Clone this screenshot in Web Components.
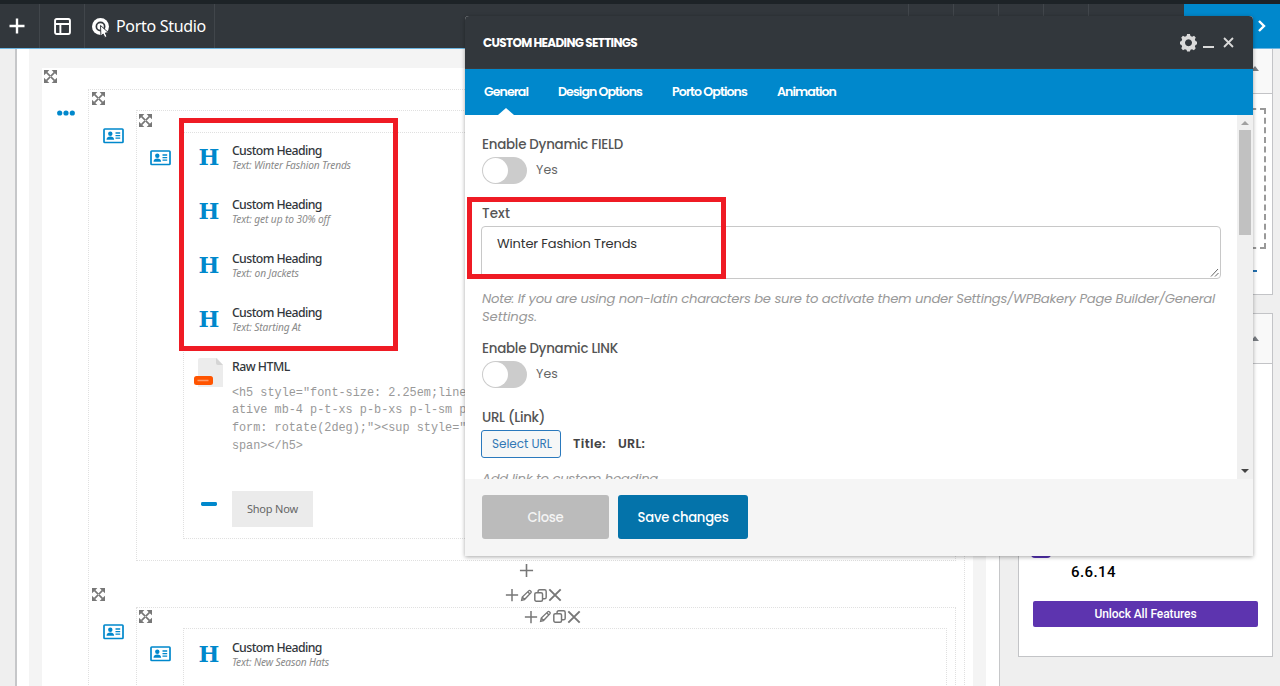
<!DOCTYPE html>
<html lang="en">
<head>
<meta charset="utf-8">
<title>Porto Studio</title>
<style>
  body {
    margin: 0;
    width: 1280px;
    height: 686px;
    overflow: hidden;
    position: relative;
    background: #efefef;
    font-family: "Noto Sans", "Open Sans", sans-serif;
    color: #32373c;
  }
  .workspace {
    display: flex;
    height: 637px;
  }
</style>
</head>
<body>
  <builder-navbar></builder-navbar>
  <div class="workspace">
    <builder-canvas></builder-canvas>
    <builder-sidebar></builder-sidebar>
  </div>
  <settings-modal></settings-modal>
  <mark-frame style="left:179px;top:118px;width:219px;height:233px"></mark-frame>
  <mark-frame style="left:467px;top:197px;width:259px;height:82px"></mark-frame>

<script>
// Tracks its text so that the line is exactly `w` pixels wide
customElements.define(
  'fit-text',
  class extends HTMLElement {
    constructor() {
      super();
      this.attachShadow({ mode: 'open' }).innerHTML = `
        <style>
          :host { display: block; white-space: nowrap; }
          span { letter-spacing: 0; }
        </style>
        <span><slot></slot></span>
      `;
    }

    connectedCallback() {
      const span = this.shadowRoot.querySelector('span');
      const nodes = this.shadowRoot.querySelector('slot').assignedNodes({ flatten: true });
      const count = nodes.reduce((sum, node) => sum + node.textContent.length, 0);
      const gap = Number(this.getAttribute('w')) - span.getBoundingClientRect().width;
      if (count) span.style.letterSpacing = `${gap / count}px`;
    }
  }
);

const icons = {
  plus: '<path d="M8 1v14M1 8h14" stroke="currentColor" stroke-width="1.7"/>',
  plusBold: '<path d="M8 .5v15M.5 8h15" stroke="currentColor" stroke-width="2.4"/>',
  layout: '<rect x="1" y="1" width="14" height="14" rx="1.5" fill="none" stroke="currentColor" stroke-width="1.8"/><path d="M1 5.6h14M6 5.6V15" stroke="currentColor" stroke-width="1.8"/>',
  studio: '<circle cx="8" cy="8" r="8" fill="currentColor"/><circle cx="8" cy="8" r="3.9" fill="none" stroke="#32373c" stroke-width="1.6"/><path d="M8 7l7.5 6.8-3 .3 1.6 3.3-2 1-1.6-3.4L8.4 17z" fill="currentColor" stroke="#32373c" stroke-width=".9"/>',
  expand: '<path d="M3 3l10 10M13 3L3 13" stroke="currentColor" stroke-width="2"/><path d="M0 0h6.6L4.600 2 2 4.600 0 6.600zM16 0v6.600L11.400 2 9.400 0zM0 16V9.400L4.600 14l2 2zM16 16H9.400l4.600-4.600 2-2z" fill="currentColor"/><path d="M7 8h2M8 7v2" stroke="#fff" stroke-width=".5"/>',
  card: '<rect x="1" y="1" width="19" height="13.5" rx=".8" fill="#fff" stroke="currentColor" stroke-width="1.7"/><circle cx="7.3" cy="5.7" r="2.2" fill="currentColor"/><path d="M3.500 11.800c0-2.400 1.700-3.200 3.800-3.200s3.800.8 3.800 3.200z" fill="currentColor"/><path d="M12.500 5h4.700M12.500 7.600h4.700M12.500 10.200h4.700" stroke="currentColor" stroke-width="1.3"/>',
  dots: '<circle cx="2.7" cy="3" r="2.6" fill="currentColor"/><circle cx="9" cy="3" r="2.6" fill="currentColor"/><circle cx="15.3" cy="3" r="2.6" fill="currentColor"/>',
  pencil: '<path d="M2 14l.8-4L11 2c1-1 3.600 1.200 2.600 2.500L5.500 13zM9.500 3.500l3 3M3 10l2.600 2.700" fill="none" stroke="currentColor" stroke-width="1.7"/>',
  copy: '<rect x="1" y="4.5" width="9.5" height="10.5" rx="1.8" fill="none" stroke="currentColor" stroke-width="1.8"/><path d="M5 4.500V3q0-2 2-2h6q2 0 2 2v7q0 2-2 2h-2.500" fill="none" stroke="currentColor" stroke-width="1.8"/>',
  cross: '<path d="M1.500 1.500l13 13M14.500 1.500l-13 13" stroke="currentColor" stroke-width="2.2"/>',
  close: '<path d="M1.500 1.500l13 13M14.500 1.500l-13 13" stroke="currentColor" stroke-width="2.7"/>',
  file: '<path d="M6 0h17l6 7v22H4V2q0-2 2-2z" fill="#ececec"/><path d="M22 0l7 7h-5q-2 0-2-2z" fill="#d5d5d5"/><rect x="0" y="18" width="19" height="9" rx="2.5" fill="#ff5400"/><path d="M3.500 22.500h11" stroke="#ff9c6b" stroke-width="1.5"/>',
  bar: '<rect width="17" height="4" rx="1.5" fill="currentColor"/>',
  gear: '<path fill-rule="evenodd" fill="currentColor" d="M6.700 0h2.600l.6 1.900 1.500.6 1.800-.9 1.600 1.700-.8 1.900.6 1.400 1.400.6v2.400l-1.400.7-.6 1.400.8 1.800-1.700 1.700-1.800-.9-1.400.6-.6 1.600H6.700l-.6-1.600-1.500-.6-1.800.9-1.600-1.700.8-1.800-.6-1.400L0 9.600V7.200l1.400-.6L2 5.200l-.8-1.900 1.600-1.700 1.800.9L6.100 1.900zM8 4.900a3.300 3.300 0 1 0 .01 0z"/>',
  chevron: '<path d="M2 1l5 5-5 5" fill="none" stroke="currentColor" stroke-width="2.4"/>',
};

customElements.define(
  'ui-icon',
  class extends HTMLElement {
    connectedCallback() {
      const [w, h] = this.getAttribute('size').split(' ');
      const box = this.getAttribute('box') || '0 0 16 16';
      if (!this.shadowRoot) this.attachShadow({ mode: 'open' });
      this.shadowRoot.innerHTML = `
        <style>
          :host { display: block; flex: none; width: ${w}px; height: ${h}px; }
          svg { display: block; overflow: visible; }
        </style>
        <svg width="${w}" height="${h}" viewBox="${box}">${icons[this.getAttribute('name')]}</svg>
      `;
    }
  }
);

customElements.define(
  'mark-frame',
  class extends HTMLElement {
    constructor() {
      super();
      this.attachShadow({ mode: 'open' }).innerHTML = `
        <style>
          :host {
            display: block;
            position: absolute;
            box-sizing: border-box;
            border: 5px solid #ef1b24;
            z-index: 3;
          }
        </style>
      `;
    }
  }
);

customElements.define(
  'builder-navbar',
  class extends HTMLElement {
    constructor() {
      super();
      this.attachShadow({ mode: 'open' }).innerHTML = `
        <style>
          :host {
            display: flex;
            box-sizing: border-box;
            height: 49px;
            border-top: 4px solid #1d2327;
            border-bottom: 1px solid #6db6e2;
            background: #32373c;
            color: #fff;
          }
          .cell {
            box-sizing: border-box;
            display: flex;
            align-items: center;
            justify-content: center;
            border-right: 1px solid #41464b;
          }
          .add { width: 40px; padding-right: 5px; }
          .layout { width: 45px; }
          .studio { width: 130px; justify-content: flex-start; padding-left: 7px; gap: 7px; font-size: 16px; }
          .space { width: 694px; }
          .tool { width: 45px; }
          .rest { flex: 1; }
          .update { display: flex; align-items: center; justify-content: flex-end; box-sizing: border-box; width: 96px; padding-right: 15px; background: #0088cc; }
        </style>
        <div class="cell add"><ui-icon name="plusBold" size="16 16"></ui-icon></div>
        <div class="cell layout"><ui-icon name="layout" size="17 17"></ui-icon></div>
        <div class="cell studio">
          <ui-icon name="studio" size="17 17"></ui-icon>
          <fit-text w="90">Porto Studio</fit-text>
        </div>
        <div class="cell space"></div>
        <div class="cell tool"></div>
        <div class="cell tool"></div>
        <div class="cell tool"></div>
        <div class="cell tool"></div>
        <div class="rest"></div>
        <div class="update"><ui-icon name="chevron" size="8 12" box="0 0 8 12"></ui-icon></div>
      `;
    }
  }
);

customElements.define(
  'row-controls',
  class extends HTMLElement {
    constructor() {
      super();
      this.attachShadow({ mode: 'open' }).innerHTML = `
        <style>
          :host { display: flex; align-items: center; gap: 1px; color: #777; }
        </style>
        <ui-icon name="plus" size="14 14"></ui-icon>
        <ui-icon name="pencil" size="13 13"></ui-icon>
        <ui-icon name="copy" size="13 13"></ui-icon>
        <ui-icon name="cross" size="14 14"></ui-icon>
      `;
    }
  }
);

// One level of the layout tree: a handle on top, a type icon on the left, content in the slot
customElements.define(
  'builder-section',
  class extends HTMLElement {
    constructor() {
      super();
      const type = this.getAttribute('type') || 'card';
      const typeIcon = type === 'dots'
        ? '<ui-icon name="dots" size="18 6" box="0 0 18 6"></ui-icon>'
        : '<ui-icon name="card" size="21 15.5" box="0 0 21 15.5"></ui-icon>';
      this.attachShadow({ mode: 'open' }).innerHTML = `
        <style>
          :host {
            display: grid;
            box-sizing: border-box;
            grid-template: 20.7px auto / 46.3px 1fr;
          }
          .handle {
            grid-column: 1 / -1;
            display: flex;
            align-items: flex-start;
            padding: 2.3px 0 0 2.4px;
            color: #777;
          }
          .type { padding: ${type === 'dots' ? '21.3px 0 0 14.5px' : '17.6px 0 0 13.4px'}; color: #0088cc; }
          ::slotted(row-controls) { margin-left: var(--controls, 400px); }
        </style>
        <div class="handle">
          <ui-icon name="expand" size="13 13"></ui-icon>
          <slot name="controls"></slot>
        </div>
        <div class="type">${typeIcon}</div>
        <div class="content"><slot></slot></div>
      `;
    }
  }
);

customElements.define(
  'heading-item',
  class extends HTMLElement {
    constructor() {
      super();
      this.attachShadow({ mode: 'open' }).innerHTML = `
        <style>
          :host { display: flex; height: 53.8px; }
          .glyph {
            width: 48px;
            box-sizing: border-box;
            padding-left: 14.5px;
            font: bold 22px/31px "DejaVu Serif", serif;
            color: #0088cc;
          }
          .title { font-size: 12.3px; font-weight: 500; line-height: 18px; color: #32373c; }
          .text { font-size: 10.2px; font-style: italic; line-height: 11px; color: #8a8a8a; }
        </style>
        <div class="glyph"><fit-text w="18.5">H</fit-text></div>
        <div>
          <div class="title"><fit-text w="90">Custom Heading</fit-text></div>
          <div class="text"><fit-text w="${this.getAttribute('w')}"><slot></slot></fit-text></div>
        </div>
      `;
    }
  }
);

customElements.define(
  'builder-canvas',
  class extends HTMLElement {
    constructor() {
      super();
      this.attachShadow({ mode: 'open' }).innerHTML = `
        <style>
          :host {
            box-sizing: border-box;
            flex: none;
            width: 985px;
            margin-left: 15px;
            padding: 0 13px 0 12px;
            border: solid #c6c7c9;
            border-width: 0 1px 0 2px;
            background: #fff;
          }
          .frame { box-sizing: border-box; border: solid #f4f4f4; border-width: 19px 13px 0; height: 637px; overflow: hidden; }
          .frame > builder-section { padding-right: 8px; }
          .box { border: 1px dotted #e0e0e0; box-sizing: border-box; }
          .outer { height: 620px; }
          .outer > builder-section { padding-right: 8px; }
          .row { height: 450.6px; }
          .row > builder-section, .next > builder-section { padding-right: 7.7px; }
          .items { height: 407px; padding-top: 9.3px; }
          .add { display: flex; height: 25px; padding: 2px 0 0 430px; box-sizing: border-box; color: #777; }
          .next { height: 120px; }
          .html { display: flex; height: 133px; }
          .html .icon { width: 48px; padding-left: 10px; box-sizing: border-box; }
          .title { font-size: 12.3px; font-weight: 500; line-height: 18px; }
          pre {
            margin: 9px 0 0;
            width: 520px;
            overflow: hidden;
            font: 11.85px/17.9px "Liberation Mono", monospace;
            color: #999;
          }
          .shop { display: flex; align-items: center; }
          .shop ui-icon { margin: -9px 15px 0 17px; color: #0088cc; }
          .btn { padding: 0 15px; background: #ebebeb; font-size: 11px; line-height: 36px; color: #666; }
        </style>
        <div class="frame">
          <builder-section type="dots">
            <div class="box outer">
              <builder-section>
                <div class="box row">
                  <builder-section>
                    <div class="box items">
                      <heading-item w="119">Text: Winter Fashion Trends</heading-item>
                      <heading-item w="98">Text: get up to 30% off</heading-item>
                      <heading-item w="67">Text: on Jackets</heading-item>
                      <heading-item w="69">Text: Starting At</heading-item>
                      <div class="html">
                        <div class="icon"><ui-icon name="file" size="29 29" box="0 0 29 29"></ui-icon></div>
                        <div>
                          <div class="title"><fit-text w="58">Raw HTML</fit-text></div>
                          <pre id="code"></pre>
                        </div>
                      </div>
                      <div class="shop">
                        <ui-icon name="bar" size="16 4" box="0 0 17 4"></ui-icon>
                        <div class="btn"><fit-text w="51">Shop Now</fit-text></div>
                      </div>
                    </div>
                  </builder-section>
                </div>
              </builder-section>
              <div class="add"><ui-icon name="plus" size="15 15"></ui-icon></div>
              <builder-section>
                <row-controls slot="controls"></row-controls>
                <div class="box next">
                  <builder-section style="--controls: 372px">
                    <row-controls slot="controls"></row-controls>
                    <div class="box items">
                      <heading-item w="97">Text: New Season Hats</heading-item>
                    </div>
                  </builder-section>
                </div>
              </builder-section>
            </div>
          </builder-section>
        </div>
      `;
      this.shadowRoot.querySelector('#code').textContent = [
        '<h5 style="font-size: 2.25em;line',
        'ative mb-4 p-t-xs p-b-xs p-l-sm p',
        'form: rotate(2deg);"><sup style="',
        'span></h5>',
      ].join('\n');
    }
  }
);

customElements.define(
  'builder-sidebar',
  class extends HTMLElement {
    constructor() {
      super();
      this.attachShadow({ mode: 'open' }).innerHTML = `
        <style>
          :host { display: block; flex: 1; padding: 0 7px 0 18px; }
          .panel { box-sizing: border-box; border: 1px solid #c3c4c7; background: #fff; }
          .first { height: 246px; border-top: 0; }
          .second { height: 344px; margin-top: 18px; }
          .head {
            display: flex;
            justify-content: flex-end;
            align-items: center;
            box-sizing: border-box;
            height: 45px;
            padding: 0 13px 6px;
            border-bottom: 1px solid #c3c4c7;
            background: #f9f9f9;
          }
          .second .head { height: 50px; padding-bottom: 0; }
          .head i { border: solid transparent; border-width: 0 4px 5px; border-bottom-color: #787c82; }
          .drop { box-sizing: border-box; height: 141px; margin: 14px 6px 0 15px; border: 2px dashed #999; }
          .link { height: 2px; width: 224px; margin: 21px 0 0 14px; background: #2271b1; }
          .logo { width: 20px; height: 20px; margin: 174px 0 0 12px; border-radius: 4px; background: #5532b4; }
          .version { margin: 4px 0 0 52px; font: 500 15px/20px Roboto, sans-serif; color: #000; }
          .unlock {
            margin: 19px 14px 0;
            border-radius: 2px;
            background: #5d34af;
            color: #fff;
            font: 500 12px/26px Roboto, sans-serif;
            display: flex;
            justify-content: center;
          }
        </style>
        <div class="panel first">
          <div class="head"><i></i></div>
          <div class="drop"></div>
          <div class="link"></div>
        </div>
        <div class="panel second">
          <div class="head"><i></i></div>
          <div class="logo"></div>
          <div class="version"><fit-text w="45">6.6.14</fit-text></div>
          <div class="unlock"><fit-text w="102">Unlock All Features</fit-text></div>
        </div>
      `;
    }
  }
);

customElements.define(
  'toggle-field',
  class extends HTMLElement {
    constructor() {
      super();
      this.attachShadow({ mode: 'open' }).innerHTML = `
        <style>
          :host { display: block; height: 46px; }
          .label { font-size: 13.4px; font-weight: 500; line-height: 20px; color: #555; }
          .line { display: flex; align-items: center; gap: 9px; margin-top: 2px; }
          .switch { box-sizing: border-box; width: 45px; height: 27px; padding: 1px; border-radius: 14px; background: #ccc; }
          .knob { width: 25px; height: 25px; border-radius: 50%; background: #fff; }
          .state { font-size: 12.5px; line-height: 18px; padding-bottom: 1px; color: #666; }
        </style>
        <div class="label"><fit-text w="${this.getAttribute('w')}"><slot></slot></fit-text></div>
        <div class="line">
          <div class="switch"><div class="knob"></div></div>
          <div class="state"><fit-text w="22">Yes</fit-text></div>
        </div>
      `;
    }
  }
);

customElements.define(
  'settings-modal',
  class extends HTMLElement {
    constructor() {
      super();
      this.attachShadow({ mode: 'open' }).innerHTML = `
        <style>
          :host {
            position: absolute;
            left: 465px;
            top: 16px;
            z-index: 2;
            width: 788px;
            height: 540px;
            display: flex;
            flex-direction: column;
            border-radius: 4px 4px 0 0;
            overflow: hidden;
            box-shadow: 0 1px 4px rgba(0, 0, 0, 0.35);
            background: #fff;
            font-family: Poppins, Inter, sans-serif;
            font-feature-settings: "cv11";
          }
          header {
            display: flex;
            align-items: center;
            box-sizing: border-box;
            height: 53px;
            padding: 1px 19px 0 18px;
            border-bottom: 1px solid #3c3a3c;
            background: #32373c;
            color: #fff;
            font-size: 12px;
            font-weight: 700;
          }
          .tools { display: flex; align-items: center; margin-left: auto; gap: 6px; color: #dadada; }
          .min { width: 11px; height: 2px; margin: 9px 3px 0 0; background: #dadada; }
          nav {
            display: flex;
            box-sizing: border-box;
            height: 46px;
            padding-left: 19px;
            gap: 30px;
            background: #0088cc;
            color: #fff;
            font-size: 12.6px;
            font-weight: 600;
            line-height: 45px;
          }
          .tab { display: flex; flex-direction: column; align-items: center; }
          .tab i { margin-top: -6px; border: solid transparent; border-width: 0 8px 7px; border-bottom-color: #fff; }
          .body { display: flex; height: 364px; overflow: hidden; }
          .form { box-sizing: border-box; flex: 1; height: 364px; padding: 20px 16px 0 17px; overflow: hidden; }
          .label { font-size: 13.4px; font-weight: 500; line-height: 20px; color: #555; }
          .area {
            display: flex;
            justify-content: space-between;
            box-sizing: border-box;
            height: 53px;
            margin: 2px 0 0 -1px;
            padding: 7px 1px 1px 15px;
            border: 1px solid #c8c8c8;
            border-radius: 4px;
            color: #333;
            font-size: 13px;
            line-height: 20px;
          }
          .area svg { align-self: flex-end; }
          .note { font-size: 13.2px; font-style: italic; line-height: 18px; color: #999; }
          .link { display: flex; align-items: center; margin: 2px 0 0 -1px; font-size: 12.7px; font-weight: 600; color: #444; }
          .select {
            box-sizing: border-box;
            width: 80px;
            height: 28px;
            padding-left: 10px;
            margin-right: 12px;
            border: 1px solid #2a79bd;
            border-radius: 3px;
            background: #f6f7f7;
            color: #3277b5;
            font-size: 12px;
            font-weight: 400;
            line-height: 26px;
          }
          .scroll { display: flex; flex-direction: column; align-items: center; box-sizing: border-box; width: 16px; padding: 6px 0; background: #f0f0f0; }
          .up { border: solid transparent; border-width: 0 4px 4px; border-bottom-color: #a0a0a0; }
          .thumb { width: 12px; height: 105px; margin-top: 5px; background: #c1c1c1; }
          .down { margin-top: auto; border: solid transparent; border-width: 4px 4px 0; border-top-color: #444; }
          footer { display: flex; box-sizing: border-box; height: 77px; padding: 16px 17px; gap: 9px; background: #f5f5f5; }
          .btn { display: flex; justify-content: center; width: 127px; height: 44px; border-radius: 3px; background: #bbb; color: #f4f4f4; font-size: 13.2px; font-weight: 500; line-height: 45px; }
          .save { width: 130px; background: #0473aa; color: #fff; }
        </style>
        <header>
          <fit-text w="154">CUSTOM HEADING SETTINGS</fit-text>
          <div class="tools">
            <ui-icon name="gear" size="17 17"></ui-icon>
            <div class="min"></div>
            <ui-icon name="close" size="11 11"></ui-icon>
          </div>
        </header>
        <nav>
          <div class="tab"><fit-text w="44">General</fit-text><i></i></div>
          <fit-text w="84">Design Options</fit-text>
          <fit-text w="75">Porto Options</fit-text>
          <fit-text w="59">Animation</fit-text>
        </nav>
        <div class="body">
          <div class="form">
            <toggle-field w="141">Enable Dynamic FIELD</toggle-field>
            <div class="label" style="margin-top:23px"><fit-text w="28">Text</fit-text></div>
            <div class="area">
              <fit-text w="140">Winter Fashion Trends</fit-text>
              <svg width="9" height="9" viewBox="0 0 9 9"><path d="M1 8.500L8 1M5 8.500L8.500 5" stroke="#666"/></svg>
            </div>
            <div class="note" style="margin-top:11px"><fit-text w="733">Note: If you are using non-latin characters be sure to activate them under Settings/WPBakery Page Builder/General</fit-text></div>
            <div class="note"><fit-text w="55">Settings.</fit-text></div>
            <toggle-field w="136" style="margin-top:13px">Enable Dynamic LINK</toggle-field>
            <div class="label" style="margin-top:23px"><fit-text w="63">URL (Link)</fit-text></div>
            <div class="link">
              <div class="select"><fit-text w="60">Select URL</fit-text></div>
              <fit-text w="33">Title:</fit-text>
              <fit-text w="27" style="margin-left:12px">URL:</fit-text>
            </div>
            <div class="note" style="margin-top:12px"><fit-text w="176">Add link to custom heading</fit-text></div>
          </div>
          <div class="scroll"><div class="up"></div><div class="thumb"></div><div class="down"></div></div>
        </div>
        <footer>
          <div class="btn"><fit-text w="36">Close</fit-text></div>
          <div class="btn save"><fit-text w="91">Save changes</fit-text></div>
        </footer>
      `;
    }
  }
);
</script>
</body>
</html>
